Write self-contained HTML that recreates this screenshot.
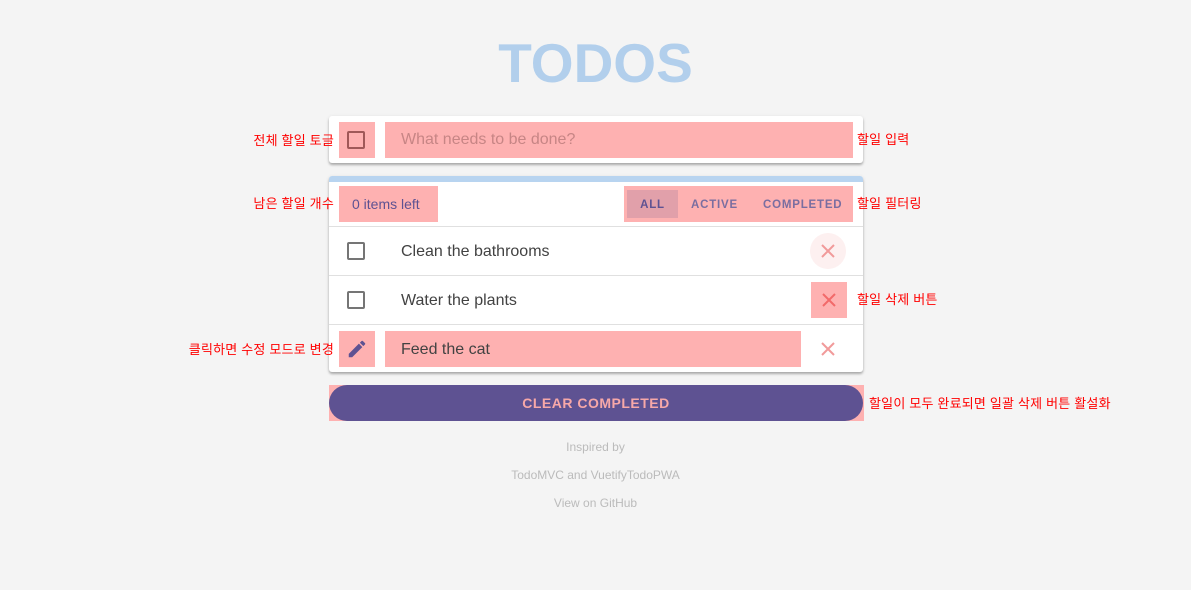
<!DOCTYPE html>
<html><head><meta charset="utf-8"><style>
*{box-sizing:border-box;margin:0;padding:0}
body{width:1191px;height:590px;background:#f4f4f4;font-family:"Liberation Sans","Noto Sans CJK KR",sans-serif;position:relative;overflow:hidden}
.a{position:absolute}
.lbl{position:absolute;color:#f00;font-size:13px;font-family:"Liberation Sans","Noto Sans CJK KR",sans-serif;line-height:16px;letter-spacing:.2px}
.card{position:absolute;left:329px;width:534px;background:#fff;border-radius:3px;box-shadow:0 2px 2px rgba(0,0,0,.25),0 1px 4px rgba(0,0,0,.1)}
.pink{position:absolute;background:#feb1b1}
.cb{position:absolute;width:18px;height:18px;border:2px solid #757575;border-radius:2px}
.row{position:absolute;left:0;width:534px;height:49px;border-top:1px solid #e0e0e0}
.txt{position:absolute;left:72px;font-size:16px;color:#424242;line-height:20px}
.f{position:absolute;top:22px;line-height:14px;font-size:11.5px;font-weight:bold;letter-spacing:.8px;color:#7a6ea0}
</style></head><body>
<div class="a" style="left:0;width:1191px;top:32px;text-align:center;font-size:55px;font-weight:bold;color:#b2cfec;line-height:62px">TODOS</div>

<div class="card" style="top:116px;height:47px">
 <div class="pink" style="left:10px;top:6px;width:36px;height:36px"></div>
 <div class="cb" style="left:18px;top:15px;border-color:#a05858"></div>
 <div class="pink" style="left:56px;top:6px;width:468px;height:36px"></div>
 <div class="a" style="left:72px;top:14px;font-size:16px;color:#c78585;line-height:20px">What needs to be done?</div>
</div>

<div class="card" style="top:176px;height:196px;overflow:hidden">
 <div class="a" style="left:0;top:0;width:534px;height:6px;background:#b8d4f0"></div>
 <div class="pink" style="left:10px;top:10px;width:99px;height:36px"></div>
 <div class="a" style="left:23px;top:19px;font-size:14px;color:#5e5292;line-height:18px">0 items left</div>
 <div class="pink" style="left:295px;top:10px;width:229px;height:36px"></div>
 <div class="a" style="left:298px;top:14px;width:51px;height:28px;background:#e1a0aa"></div>
 <div class="f" style="left:298px;width:51px;text-align:center;color:#5e5292">ALL</div>
 <div class="f" style="left:362px">ACTIVE</div>
 <div class="f" style="left:434px">COMPLETED</div>

 <div class="row" style="top:50px">
  <div class="cb" style="left:18px;top:15px"></div>
  <div class="txt" style="top:15px">Clean the bathrooms</div>
  <div class="a" style="left:481px;top:6px;width:36px;height:36px;border-radius:50%;background:#fdf0f0"></div>
  <svg class="a" style="left:489px;top:14px" width="20" height="20" viewBox="0 0 20 20"><path d="M4 4L16 16M16 4L4 16" stroke="#f19a9a" stroke-width="2"/></svg>
 </div>
 <div class="row" style="top:99px">
  <div class="cb" style="left:18px;top:15px"></div>
  <div class="txt" style="top:15px">Water the plants</div>
  <div class="pink" style="left:482px;top:6px;width:36px;height:36px"></div>
  <svg class="a" style="left:490px;top:14px" width="20" height="20" viewBox="0 0 20 20"><path d="M4 4L16 16M16 4L4 16" stroke="#f26a6a" stroke-width="2"/></svg>
 </div>
 <div class="row" style="top:148px">
  <div class="pink" style="left:10px;top:6px;width:36px;height:36px"></div>
  <svg class="a" style="left:17px;top:13px" width="22" height="22" viewBox="0 0 24 24"><path fill="#5e5292" d="M3 17.25V21h3.75L17.81 9.94l-3.75-3.75L3 17.25zM20.71 7.04a1 1 0 000-1.41l-2.34-2.34a1 1 0 00-1.41 0l-1.83 1.83 3.75 3.75 1.83-1.830z"/></svg>
  <div class="pink" style="left:56px;top:6px;width:416px;height:36px"></div>
  <div class="txt" style="top:15px">Feed the cat</div>
  <svg class="a" style="left:489px;top:14px" width="20" height="20" viewBox="0 0 20 20"><path d="M4 4L16 16M16 4L4 16" stroke="#f19a9a" stroke-width="2"/></svg>
 </div>
</div>

<div class="a" style="left:329px;top:385px;width:535px;height:36px;background:#feb1b1"></div>
<div class="a" style="left:329px;top:385px;width:534px;height:36px;border-radius:18px;background:#5e5292;color:#f7a8a8;font-weight:bold;font-size:14px;letter-spacing:.5px;text-align:center;line-height:36px">CLEAR COMPLETED</div>

<div class="a" style="left:0;width:1191px;top:440px;text-align:center;font-size:12px;color:#bbb;line-height:14px">Inspired by</div>
<div class="a" style="left:0;width:1191px;top:468px;text-align:center;font-size:12px;color:#bbb;line-height:14px">TodoMVC and VuetifyTodoPWA</div>
<div class="a" style="left:0;width:1191px;top:496px;text-align:center;font-size:12px;color:#bbb;line-height:14px">View on GitHub</div>

<div class="lbl" style="right:857px;top:133px">전체 할일 토글</div>
<div class="lbl" style="left:857px;top:132px">할일 입력</div>
<div class="lbl" style="right:857px;top:196px">남은 할일 개수</div>
<div class="lbl" style="left:857px;top:196px">할일 필터링</div>
<div class="lbl" style="left:857px;top:292px">할일 삭제 버튼</div>
<div class="lbl" style="right:857px;top:342px">클릭하면 수정 모드로 변경</div>
<div class="lbl" style="left:869px;top:396px">할일이 모두 완료되면 일괄 삭제 버튼 활설화</div>
</body></html>
